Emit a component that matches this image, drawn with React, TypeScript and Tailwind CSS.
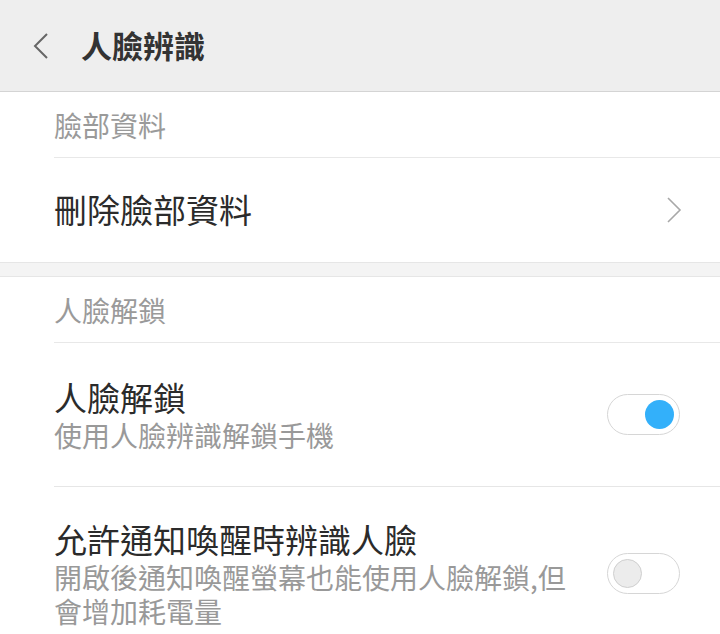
import React, { useState } from 'react';

const font = { fontFamily: '"Noto Sans CJK TC", "Noto Sans", sans-serif' };

const Toggle: React.FC<{ on: boolean; onChange: () => void }> = ({ on, onChange }) => (
  <button
    onClick={onChange}
    className="shrink-0 w-[73px] h-[41px] rounded-full border border-[#d6d6d6] bg-white flex items-center px-[5px]"
  >
    {on ? (
      <span className="ml-auto w-[29px] h-[29px] rounded-full bg-[#33b0fa]" />
    ) : (
      <span className="w-[29px] h-[29px] rounded-full bg-[#ececec] border border-[#cfcfcf]" />
    )}
  </button>
);

const SectionHeader: React.FC<{ label: string }> = ({ label }) => (
  <div className="pl-[54px] bg-white">
    <div className="h-[66px] flex items-center border-b border-[#e8e8e8] text-[28px] text-[#9a9a9a]">
      {label}
    </div>
  </div>
);

export default function App() {
  const [faceUnlock, setFaceUnlock] = useState(true);
  const [notifyWake, setNotifyWake] = useState(false);

  return (
    <div className="w-[720px] h-[634px] overflow-hidden bg-white" style={font}>
      {/* Title bar */}
      <div className="h-[92px] bg-[#eeeeee] border-b border-[#d4d4d4] flex items-center">
        <svg width="18" height="30" viewBox="0 0 18 30" className="ml-[32px]">
          <path d="M15 3 L3 15 L15 27" fill="none" stroke="#666" strokeWidth="2" />
        </svg>
        <span className="ml-[31px] text-[31px] font-bold text-[#333]">人臉辨識</span>
      </div>

      <SectionHeader label="臉部資料" />

      {/* Delete face data */}
      <div className="h-[104px] flex items-center pl-[54px] pr-[38px] bg-white">
        <span className="flex-1 text-[33px] text-[#2b2b2b]">刪除臉部資料</span>
        <svg width="16" height="28" viewBox="0 0 16 28">
          <path d="M2 2 L14 14 L2 26" fill="none" stroke="#a8a8a8" strokeWidth="1.6" />
        </svg>
      </div>

      <div className="h-[15px] bg-[#f4f4f4] border-y border-[#e6e6e6]" />

      <SectionHeader label="人臉解鎖" />

      {/* Face unlock */}
      <div className="pl-[54px] bg-white">
        <div className="flex items-center pr-[40px] pt-[33px] pb-[34px] border-b border-[#e6e6e6]">
          <div className="flex-1">
            <div className="text-[33px] leading-[42px] text-[#2b2b2b]">人臉解鎖</div>
            <div className="text-[28px] leading-[34px] text-[#999]">使用人臉辨識解鎖手機</div>
          </div>
          <Toggle on={faceUnlock} onChange={() => setFaceUnlock(!faceUnlock)} />
        </div>
      </div>

      {/* Wake by notification */}
      <div className="pl-[54px] bg-white">
        <div className="flex items-center pr-[40px] pt-[31px] pb-[30px] gap-[28px]">
          <div className="flex-1">
            <div className="text-[33px] leading-[42px] text-[#2b2b2b]">允許通知喚醒時辨識人臉</div>
            <div className="text-[28px] leading-[34px] text-[#999]">
              開啟後通知喚醒螢幕也能使用人臉解鎖,但會增加耗電量
            </div>
          </div>
          <Toggle on={notifyWake} onChange={() => setNotifyWake(!notifyWake)} />
        </div>
      </div>
    </div>
  );
}
